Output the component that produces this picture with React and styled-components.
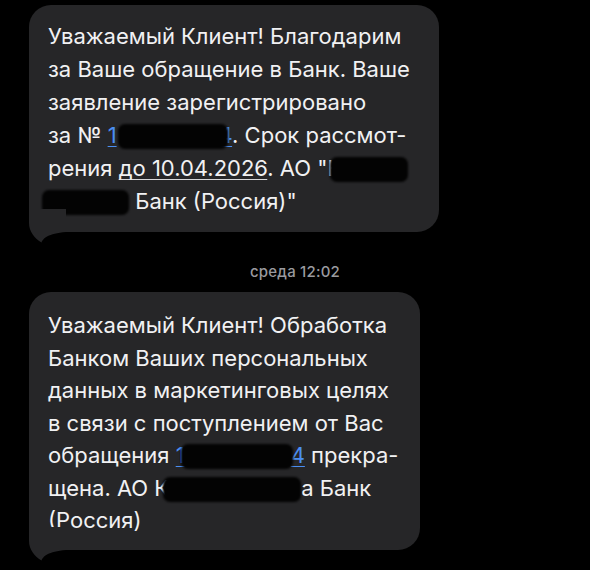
import React from "react";
import styled, { createGlobalStyle } from "styled-components";

// ===== Styled Components =====

const GlobalStyle = createGlobalStyle`
  html, body {
    margin: 0;
    padding: 0;
    background: #000;
  }
  body {
    font-family: Inter, "Noto Sans", "DejaVu Sans", sans-serif;
    -webkit-font-smoothing: antialiased;
  }
`;

const Thread = styled.div`
  width: 590px;
  height: 570px;
  overflow: hidden;
  background: #000;
  padding-top: 5px;
  box-sizing: border-box;
`;

const Bubble = styled.div`
  position: relative;
  box-sizing: border-box;
  width: ${(p) => p.$width}px;
  margin-left: 29px;
  padding: ${(p) => p.$padTop}px 14px ${(p) => p.$padBottom}px 19px;
  background: #262628;
  border-radius: 22px;
  color: #f1f1f3;
  font-size: 22px;
  line-height: ${(p) => p.$lineHeight}px;
`;

const Line = styled.div`
  white-space: nowrap;
`;

const Tail = styled.svg`
  position: absolute;
  left: -1px;
  bottom: -11px;
  width: 38px;
  height: 34px;
  display: block;
`;

const Underlined = styled.span`
  text-decoration: underline;
  text-decoration-thickness: 1px;
  text-underline-offset: 3px;
  text-decoration-color: ${(p) => (p.$blue ? "#4a8ef2" : "#d8d8da")};
  color: ${(p) => (p.$blue ? "#4a8ef2" : "inherit")};
`;

const Redact = styled.span`
  display: inline-block;
  width: ${(p) => p.$w}px;
  height: 25px;
  margin-left: ${(p) => p.$ml || 0}px;
  margin-right: ${(p) => p.$mr || 0}px;
  vertical-align: -6px;
  background: #030303;
  border-radius: 7px;
  filter: blur(1.2px);
`;

const Stamp = styled.div`
  margin: 29px 0 10px;
  text-align: center;
  font-size: 15px;
  line-height: 21px;
  font-weight: 500;
  color: #9a9a9f;
  letter-spacing: 0.2px;
`;

const BubbleTail = () => (
  <Tail viewBox="0 0 38 34">
    <path
      d="M1 0 L1 14 C1 22 6 29 13.5 33.5 C15 29.5 20 24.5 38 23 L38 0 Z"
      fill="#262628"
    />
  </Tail>
);

// ===== App =====

const App = () => {
  return (
    <>
      <GlobalStyle />
      <Thread>
        <Bubble $width={410} $padTop={15} $padBottom={14} $lineHeight={33}>
          <Line>Уважаемый Клиент! Благодарим</Line>
          <Line>за Ваше обращение в Банк. Ваше</Line>
          <Line>заявление зарегистрировано</Line>
          <Line>
            за № <Underlined $blue>1<Redact $w={110} $ml={1} $mr={-9} />4</Underlined>. Срок рассмот-
          </Line>
          <Line>
            рения <Underlined>до 10.04.2026</Underlined>. АО "К<Redact $w={78} $ml={-12} />
          </Line>
          <Line>
            <Redact $w={87} $ml={-6} /> Банк (Россия)"
          </Line>
          <BubbleTail />
        </Bubble>

        <Stamp>среда 12:02</Stamp>

        <Bubble $width={391} $padTop={17} $padBottom={13} $lineHeight={32.5}>
          <Line>Уважаемый Клиент! Обработка</Line>
          <Line>Банком Ваших персональных</Line>
          <Line>данных в маркетинговых целях</Line>
          <Line>в связи с поступлением от Вас</Line>
          <Line>
            обращения <Underlined $blue>1<Redact $w={112} $ml={-4} $mr={-2} />4</Underlined> прекра-
          </Line>
          <Line>
            щена. АО К<Redact $w={138} $ml={-6} />а Банк
          </Line>
          <Line>(Россия)</Line>
          <BubbleTail />
        </Bubble>
      </Thread>
    </>
  );
};

export default App;
